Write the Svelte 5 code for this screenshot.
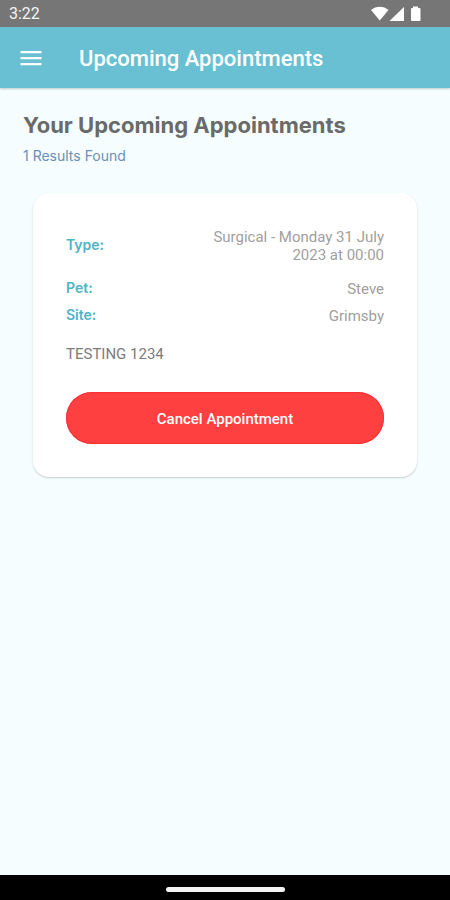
<script>
  const results = [
    {
      details: [
        { label: 'Type:', value: 'Surgical - Monday 31 July 2023 at 00:00' },
        { label: 'Pet:', value: 'Steve' },
        { label: 'Site:', value: 'Grimsby' }
      ],
      note: 'TESTING 1234'
    }
  ];
</script>

<div class="screen">
  <div class="status">
    <span>3:22</span>
    <svg width="51" height="16" viewBox="0 0 51 16" fill="#fff" aria-hidden="true">
      <path d="M0 4C5-.5 12.500-.5 17.500 4L8.800 14.600Z" />
      <path d="M18.500 15L33 1V15Z" />
      <path d="M42 2V.5h5V2h1.500q1 0 1 1V14q0 1-1 1h-7.500q-1 0-1-1V3q0-1 1-1Z" />
    </svg>
  </div>

  <header>
    <button class="menu" aria-label="Open menu">
      <svg width="22" height="16" viewBox="0 0 22 16" fill="#fff" aria-hidden="true">
        <rect x="0.500" y="0" width="21" height="2.300" rx="0.500" />
        <rect x="0.500" y="6" width="21" height="2.300" rx="0.500" />
        <rect x="0.500" y="12" width="21" height="2.300" rx="0.500" />
      </svg>
    </button>
    <h1>Upcoming Appointments</h1>
  </header>

  <main>
    <h2>Your Upcoming Appointments</h2>
    <p class="count">{results.length} Results Found</p>

    {#each results as item}
      <article>
        <dl>
          {#each item.details as row}
            <div class="row">
              <dt>{row.label}</dt>
              <dd>{row.value}</dd>
            </div>
          {/each}
        </dl>
        <p class="note">{item.note}</p>
        <button class="cancel">Cancel Appointment</button>
      </article>
    {/each}
  </main>

  <div class="nav"><span></span></div>
</div>

<style>
  :global(body) {
    margin: 0;
  }

  .screen {
    display: flex;
    flex-direction: column;
    min-height: 100vh;
    background: #f6fdfe;
    font-family: Roboto, sans-serif;
  }

  h1, h2, p, dl, dd {
    margin: 0;
  }

  button {
    border: 0;
    padding: 0;
    font-family: inherit;
    cursor: pointer;
  }

  .status {
    display: flex;
    align-items: center;
    justify-content: space-between;
    height: 27px;
    padding: 0 28px 0 9px;
    background: #767676;
    color: #f4f4f4;
    font-size: 16px;
  }

  header {
    display: flex;
    align-items: center;
    gap: 37px;
    box-sizing: border-box;
    height: 61px;
    padding: 2px 20px 0;
    background: #69c0d3;
    box-shadow: 0 1px 2px rgba(60, 90, 100, 0.3);
  }

  .menu {
    display: flex;
    background: none;
  }

  h1 {
    color: #fff;
    font-size: 22px;
    font-weight: 500;
    line-height: 28px;
  }

  main {
    flex: 1;
    padding: 23px;
  }

  h2 {
    color: #686b6a;
    font-family: Inter, sans-serif;
    font-size: 22px;
    font-weight: 700;
    line-height: 28px;
  }

  .count {
    margin-top: 7px;
    color: #6d8fb4;
    font-family: Inter, sans-serif;
    font-size: 14px;
    line-height: 20px;
  }

  article {
    margin: 27px 10px 0;
    padding: 35px 33px 33px;
    border-radius: 16px;
    background: #fff;
    box-shadow: 0 1px 2px rgba(0, 0, 0, 0.2);
  }

  dl {
    display: flex;
    flex-direction: column;
    gap: 9px;
  }

  .row {
    display: flex;
    align-items: center;
    justify-content: space-between;
    line-height: 18px;
  }

  .row:first-child {
    margin-bottom: 7px;
  }

  dt {
    padding-bottom: 2px;
    color: #4bb5c9;
    font-family: Inter, sans-serif;
    font-size: 14px;
    font-weight: 600;
    line-height: 16px;
  }

  dd {
    max-width: 190px;
    color: #a0a0a0;
    font-size: 15px;
    text-align: right;
  }

  .note {
    margin-top: 20px;
    color: #7c7c7c;
    font-size: 15px;
    line-height: 18px;
  }

  .cancel {
    display: block;
    width: 100%;
    height: 52px;
    margin-top: 29px;
    padding-top: 2px;
    border-radius: 26px;
    background: #ff4040;
    box-shadow: inset 0 0 1px 1px #fa3034;
    color: #fff;
    font-size: 15px;
    font-weight: 500;
  }

  .nav {
    display: flex;
    align-items: center;
    justify-content: center;
    height: 25px;
    background: #000;
  }

  .nav span {
    width: 119px;
    height: 5px;
    margin-top: 3px;
    border-radius: 3px;
    background: #f4f4f4;
  }
</style>
